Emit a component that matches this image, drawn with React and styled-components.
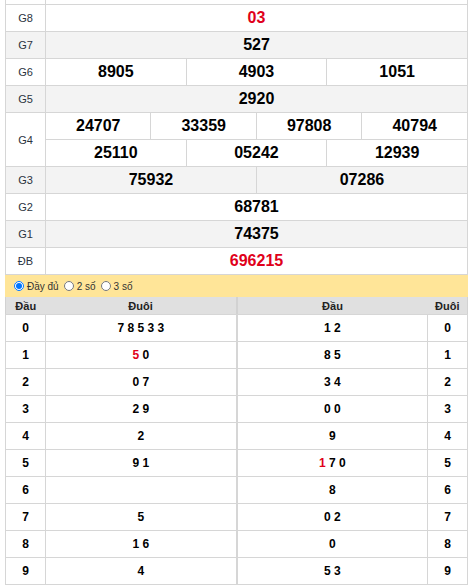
import React from "react"
import styled, { createGlobalStyle } from "styled-components"

const GlobalStyle = createGlobalStyle`
  body {
    margin: 0;
    background: #fff;
    font-family: "Liberation Sans", Arial, sans-serif;
    color: #000;
  }
`

const prizes = [
  { name: "G8", nums: ["03"], red: true },
  { name: "G7", nums: ["527"] },
  { name: "G6", nums: ["8905", "4903", "1051"] },
  { name: "G5", nums: ["2920"] },
  { name: "G4", nums: ["24707", "33359", "97808", "40794"], second: ["25110", "05242", "12939"] },
  { name: "G3", nums: ["75932", "07286"] },
  { name: "G2", nums: ["68781"] },
  { name: "G1", nums: ["74375"] },
  { name: "ĐB", nums: ["696215"], red: true },
]

const left = [
  ["7 8 5 3 3"],
  [{ t: "5", red: true }, " 0"],
  ["0 7"],
  ["2 9"],
  ["2"],
  ["9 1"],
  [""],
  ["5"],
  ["1 6"],
  ["4"],
]

const right = [
  ["1 2"],
  ["8 5"],
  ["3 4"],
  ["0 0"],
  ["9"],
  [{ t: "1", red: true }, " 7 0"],
  ["8"],
  ["0 2"],
  ["0"],
  ["5 3"],
]

export default function App() {
  return (
    <Page>
      <GlobalStyle />
      <PrizeTable>
        <colgroup>
          <col style={{ width: 40 }} />
          {Array.from({ length: 12 }).map((_, i) => (
            <col key={i} />
          ))}
        </colgroup>
        <tbody>
          <TopStub>
            <td />
            <td colSpan={12} />
          </TopStub>
          {prizes.map((p, i) => {
            const alt = i % 2 === 1
            const span = 12 / p.nums.length
            return (
              <React.Fragment key={p.name}>
                <PrizeRow $alt={alt}>
                  <Label rowSpan={p.second ? 2 : 1}>{p.name}</Label>
                  {p.nums.map((n, j) => (
                    <Num key={j} colSpan={span} $red={p.red}>
                      {n}
                    </Num>
                  ))}
                </PrizeRow>
                {p.second && (
                  <PrizeRow $alt={alt}>
                    {p.second.map((n, j) => (
                      <Num key={j} colSpan={12 / p.second.length}>
                        {n}
                      </Num>
                    ))}
                  </PrizeRow>
                )}
              </React.Fragment>
            )
          })}
        </tbody>
      </PrizeTable>

      <OptionBar>
        <Option>
          <input type="radio" name="mode" defaultChecked />
          Đầy đủ
        </Option>
        <Option>
          <input type="radio" name="mode" />2 số
        </Option>
        <Option>
          <input type="radio" name="mode" />3 số
        </Option>
      </OptionBar>

      <LotoWrap>
        <LotoTable>
          <colgroup>
            <col style={{ width: 40 }} />
            <col />
          </colgroup>
          <thead>
            <tr>
              <Head>Đầu</Head>
              <Head>Đuôi</Head>
            </tr>
          </thead>
          <tbody>
            {left.map((parts, i) => (
              <tr key={i}>
                <Index>{i}</Index>
                <Digits>{renderParts(parts)}</Digits>
              </tr>
            ))}
          </tbody>
        </LotoTable>
        <LotoTable>
          <colgroup>
            <col />
            <col style={{ width: 40 }} />
          </colgroup>
          <thead>
            <tr>
              <Head>Đầu</Head>
              <Head>Đuôi</Head>
            </tr>
          </thead>
          <tbody>
            {right.map((parts, i) => (
              <tr key={i}>
                <Digits>{renderParts(parts)}</Digits>
                <Index>{i}</Index>
              </tr>
            ))}
          </tbody>
        </LotoTable>
      </LotoWrap>
    </Page>
  )
}

function renderParts(parts) {
  return parts.map((p, i) =>
    typeof p === "string" ? (
      <React.Fragment key={i}>{p}</React.Fragment>
    ) : (
      <Red key={i}>{p.t}</Red>
    )
  )
}

const Page = styled.div`
  width: 463px;
  padding-left: 5px;
  margin-top: -1px;
`

const PrizeTable = styled.table`
  width: 463px;
  table-layout: fixed;
  border-collapse: collapse;
  td {
    border: 1px solid #d6d6d6;
    padding: 0;
  }
`

const TopStub = styled.tr`
  td {
    height: 4px;
  }
`

const PrizeRow = styled.tr`
  background: ${(p) => (p.$alt ? "#f3f3f3" : "#fff")};
  td {
    height: 26px;
  }
`

const Label = styled.td`
  text-align: center;
  font-size: 11px;
  color: #2b3340;
`

const Num = styled.td`
  text-align: center;
  font-size: 16px;
  font-weight: bold;
  color: ${(p) => (p.$red ? "#e0001a" : "#000")};
`

const OptionBar = styled.div`
  display: flex;
  align-items: center;
  gap: 5px;
  height: 22px;
  padding-left: 9px;
  background: #ffe598;
  font-size: 10px;
  color: #333;
`

const Option = styled.label`
  display: flex;
  align-items: center;
  gap: 2px;
  input {
    width: 10px;
    height: 10px;
    margin: 0 1px 0 0;
  }
`

const LotoWrap = styled.div`
  display: flex;
`

const LotoTable = styled.table`
  flex: 1;
  width: 50%;
  table-layout: fixed;
  border-collapse: collapse;
  border-left: 1px solid #d2d2d2;
  border-right: 1px solid #d2d2d2;
  td {
    border: 1px solid #d6d6d6;
    height: 26px;
    padding: 0;
    text-align: center;
    font-weight: bold;
    font-size: 12px;
  }
`

const Head = styled.th`
  background: #e0e0e0;
  height: 17px;
  padding: 0;
  font-size: 11px;
  font-weight: bold;
  color: #222;
  border-bottom: 1px solid #d6d6d6;
`

const Index = styled.td``

const Digits = styled.td``

const Red = styled.span`
  color: #e0001a;
`
